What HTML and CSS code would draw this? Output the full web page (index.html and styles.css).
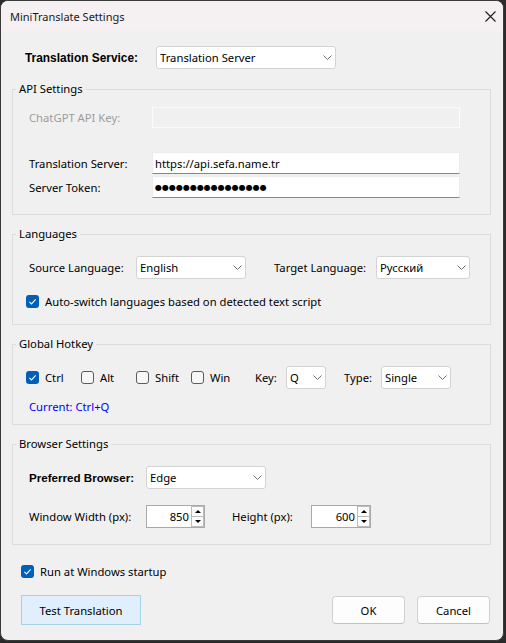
FILE: index.html
```html
<!DOCTYPE html>
<html>
<head>
<meta charset="utf-8">
<link rel="stylesheet" href="styles.css">
</head>
<body>
<div class="window">
  <div class="titlebar">
    <span class="title">MiniTranslate Settings</span>
    <svg class="close" width="11" height="11" viewBox="0 0 11 11"><path d="M0.5 0.5 L10.5 10.5 M10.5 0.5 L0.5 10.5" stroke="#1c1c1c" stroke-width="1.1" fill="none"/></svg>
  </div>
  <div class="content">
    <div class="service-row">
      <span class="bold service-label">Translation Service:</span>
      <div class="combo w180"><span>Translation Server</span><svg class="chev" width="9" height="5" viewBox="0 0 9 5"><path d="M0.5 0.5 L4.5 4.5 L8.5 0.5" stroke="#707070" fill="none"/></svg></div>
    </div>

    <fieldset class="group api">
      <legend>API Settings</legend>
      <div class="row api-row first">
        <span class="api-label disabled">ChatGPT API Key:</span>
        <div class="textbox disabled-box"></div>
      </div>
      <div class="row api-row second">
        <span class="api-label">Translation Server:</span>
        <div class="textbox">https://api.sefa.name.tr</div>
      </div>
      <div class="row api-row third">
        <span class="api-label">Server Token:</span>
        <div class="textbox"><span class="dots">●●●●●●●●●●●●●●●●</span></div>
      </div>
    </fieldset>

    <fieldset class="group langs">
      <legend>Languages</legend>
      <div class="row lang-row">
        <span class="src-label">Source Language:</span>
        <div class="combo w110"><span>English</span><svg class="chev" width="9" height="5" viewBox="0 0 9 5"><path d="M0.5 0.5 L4.5 4.5 L8.5 0.5" stroke="#707070" fill="none"/></svg></div>
        <span class="tgt-label">Target Language:</span>
        <div class="combo w94"><span>Русский</span><svg class="chev" width="9" height="5" viewBox="0 0 9 5"><path d="M0.5 0.5 L4.5 4.5 L8.5 0.5" stroke="#707070" fill="none"/></svg></div>
      </div>
      <div class="row check-row auto-row">
        <span class="cb checked"><svg width="13" height="13" viewBox="0 0 13 13"><path d="M3.4 6.9 L5.5 8.9 L9.7 4.4" stroke="#fff" stroke-width="1.1" fill="none"/></svg></span>
        <span class="cb-text">Auto-switch languages based on detected text script</span>
      </div>
    </fieldset>

    <fieldset class="group hotkey">
      <legend>Global Hotkey</legend>
      <div class="row hk-row">
        <div class="chk-item w55"><span class="cb checked"><svg width="13" height="13" viewBox="0 0 13 13"><path d="M3.4 6.9 L5.5 8.9 L9.7 4.4" stroke="#fff" stroke-width="1.1" fill="none"/></svg></span><span>Ctrl</span></div>
        <div class="chk-item w55"><span class="cb"></span><span>Alt</span></div>
        <div class="chk-item w55"><span class="cb"></span><span>Shift</span></div>
        <div class="chk-item w64"><span class="cb"></span><span>Win</span></div>
        <span class="key-label">Key:</span>
        <div class="combo w40"><span>Q</span><svg class="chev" width="9" height="5" viewBox="0 0 9 5"><path d="M0.5 0.5 L4.5 4.5 L8.5 0.5" stroke="#707070" fill="none"/></svg></div>
        <span class="type-label">Type:</span>
        <div class="combo w70"><span>Single</span><svg class="chev" width="9" height="5" viewBox="0 0 9 5"><path d="M0.5 0.5 L4.5 4.5 L8.5 0.5" stroke="#707070" fill="none"/></svg></div>
      </div>
      <div class="row current-row">Current: Ctrl+Q</div>
    </fieldset>

    <fieldset class="group browser">
      <legend>Browser Settings</legend>
      <div class="row br-row1">
        <span class="br-label bold">Preferred Browser:</span>
        <div class="combo w120"><span>Edge</span><svg class="chev" width="9" height="5" viewBox="0 0 9 5"><path d="M0.5 0.5 L4.5 4.5 L8.5 0.5" stroke="#707070" fill="none"/></svg></div>
      </div>
      <div class="row br-row2">
        <span class="br-label">Window Width (px):</span>
        <div class="numeric w59"><span class="num-text">850</span><span class="spin"><span class="spin-btn"><i class="tri-up"></i></span><span class="spin-btn"><i class="tri-down"></i></span></span></div>
        <span class="h-label">Height (px):</span>
        <div class="numeric w60"><span class="num-text">600</span><span class="spin"><span class="spin-btn"><i class="tri-up"></i></span><span class="spin-btn"><i class="tri-down"></i></span></span></div>
      </div>
    </fieldset>

    <div class="row check-row startup-row">
      <span class="cb checked"><svg width="13" height="13" viewBox="0 0 13 13"><path d="M3.4 6.9 L5.5 8.9 L9.7 4.4" stroke="#fff" stroke-width="1.1" fill="none"/></svg></span>
      <span class="cb-text">Run at Windows startup</span>
    </div>

    <div class="button-row">
      <div class="btn test-btn">Test Translation</div>
      <div class="spacer"></div>
      <div class="btn ok-btn">OK</div>
      <div class="btn cancel-btn">Cancel</div>
    </div>
  </div>
</div>
</body>
</html>
```
FILE: styles.css
```css
html, body {
  margin: 0;
  padding: 0;
  background: #2b2b2b;
}
body {
  width: 506px;
  height: 643px;
  overflow: hidden;
  font-family: "Noto Sans", "DejaVu Sans", sans-serif;
  font-size: 11.25px;
  color: #000;
}
.window {
  width: 502px;
  height: 639px;
  border: 1px solid #3a3a3a;
  border-radius: 8px;
  background: #f0f0f0;
  overflow: hidden;
}
.titlebar {
  height: 30px;
  background: #f5f0f1;
  display: flex;
  align-items: center;
  justify-content: space-between;
  padding-left: 9px;
}
.title {
  font-size: 11px;
  color: #1a1a1a;
}
.close {
  margin-right: 7px;
  margin-top: 1px;
}
.content {
  padding: 0 12px 0 11px;
}
.bold {
  font-family: "Liberation Sans", Arial, sans-serif;
  font-weight: bold;
  font-size: 11.9px;
}
.br-label.bold {
  font-size: 11.6px;
}
.row {
  display: flex;
  align-items: center;
}
.service-row {
  display: flex;
  align-items: center;
  height: 23px;
  margin-top: 15px;
}
.service-label {
  margin-left: 13px;
  width: 131px;
}
.combo {
  box-sizing: border-box;
  height: 23px;
  background: #fff;
  border: 1px solid #d3d3d3;
  border-radius: 3px;
  display: flex;
  align-items: center;
  padding-left: 3px;
}
.combo span {
  flex: 1;
  white-space: nowrap;
}
.chev {
  margin-right: 3px;
  flex: none;
}
.w180 { width: 180px; }
.w110 { width: 110px; }
.w94 { width: 94px; }
.w40 { width: 40px; }
.w70 { width: 70px; }
.w120 { width: 120px; }

.group {
  margin: 12px 0 0;
  padding: 0;
  border: 1px solid #dcdcdc;
  min-width: 0;
}
.group + .group {
  margin-top: 11px;
}
.group legend {
  margin-left: 3px;
  padding: 0 3px;
  line-height: 16px;
  font-size: 11.25px;
}
.api { padding-bottom: 16px; }
.api-row {
  padding-left: 16px;
}
.api-row.first { margin-top: 10px; }
.api-row.second { margin-top: 24px; }
.api-row.third { margin-top: 2px; }
.api-label {
  width: 123px;
}
.disabled { color: #9c9c9c; }
.textbox {
  box-sizing: border-box;
  width: 308px;
  height: 22px;
  background: #fff;
  border: 1px solid #ececec;
  border-bottom-color: #878787;
  padding-left: 2px;
  display: flex;
  align-items: center;
}
.disabled-box {
  height: 21px;
  background: #f0f0f0;
  border: 1px solid #fbfbfb;
}
.dots {
  font-family: "DejaVu Sans", sans-serif;
  font-size: 8px;
}

.langs { padding-bottom: 15px; }
.lang-row {
  padding-left: 16px;
  margin-top: 14px;
}
.src-label { width: 107px; }
.tgt-label { width: 102px; margin-left: 28px; }
.check-row {
  height: 16px;
}
.auto-row {
  margin-top: 14px;
  padding-left: 13px;
}
.cb {
  box-sizing: border-box;
  width: 13px;
  height: 13px;
  border: 1px solid #5b5b5b;
  border-radius: 3px;
  background: #f7f7f7;
  flex: none;
  margin-right: 6px;
  display: inline-flex;
}
.cb.checked {
  border: none;
  background: #005fb8;
}
.hotkey { padding-bottom: 10px; }
.hk-row {
  padding-left: 13px;
  margin-top: 14px;
}
.chk-item {
  display: flex;
  align-items: center;
}
.w55 { width: 55px; }
.w64 { width: 64px; }
.key-label { width: 31px; }
.type-label { width: 37px; margin-left: 18px; }
.current-row {
  height: 16px;
  margin-top: 9px;
  padding-left: 16px;
  color: #0000ff;
}

.browser { padding-bottom: 16px; }
.br-row1 {
  padding-left: 16px;
  margin-top: 14px;
}
.br-row2 {
  padding-left: 16px;
  margin-top: 16px;
}
.br-label { width: 117px; }
.h-label { width: 79px; margin-left: 27px; }
.numeric {
  box-sizing: border-box;
  height: 23px;
  background: #fff;
  border: 1px solid #a9a9a9;
  display: flex;
  align-items: stretch;
}
.w59 { width: 59px; }
.w60 { width: 60px; }
.num-text {
  flex: 1;
  text-align: right;
  padding-right: 2px;
  display: flex;
  align-items: center;
  justify-content: flex-end;
}
.spin {
  width: 13px;
  display: flex;
  flex-direction: column;
}
.spin-btn {
  box-sizing: border-box;
  flex: 1;
  border: 1px solid #bcbcbc;
  background: #fbfbfb;
  display: flex;
  align-items: center;
  justify-content: center;
}
.spin-btn + .spin-btn {
  border-top: none;
}
.tri-up {
  width: 0;
  height: 0;
  border-left: 3px solid transparent;
  border-right: 3px solid transparent;
  border-bottom: 3px solid #000;
}
.tri-down {
  width: 0;
  height: 0;
  border-left: 3px solid transparent;
  border-right: 3px solid transparent;
  border-top: 3px solid #000;
}

.startup-row {
  margin-top: 18px;
  padding-left: 9px;
}
.button-row {
  display: flex;
  align-items: center;
  margin-top: 16px;
  padding-left: 9px;
  height: 30px;
}
.btn {
  box-sizing: border-box;
  display: flex;
  align-items: center;
  justify-content: center;
}
.test-btn {
  width: 120px;
  height: 30px;
  background: #e0effb;
  border: 1px solid #a3d3e6;
}
.spacer { flex: 1; }
.ok-btn, .cancel-btn {
  width: 73px;
  height: 28px;
  background: #fdfdfd;
  border: 1px solid #d0d0d0;
  border-bottom-color: #c2c2c2;
  border-radius: 4px;
}
.ok-btn { margin-right: 12px; }
.cancel-btn { margin-right: 1px; }
```
